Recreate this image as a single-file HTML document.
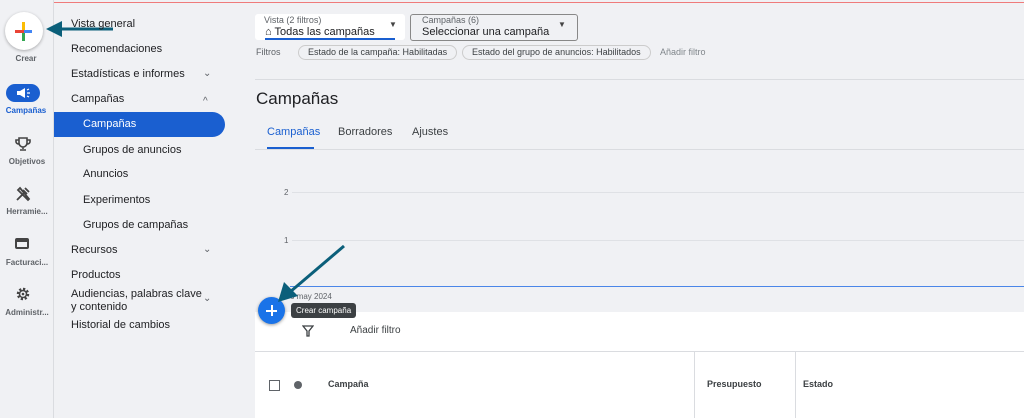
<!DOCTYPE html><html><head><style>
body{margin:0;width:1024px;height:418px;overflow:hidden;background:#f0f1f4;font-family:"Liberation Sans",sans-serif;color:#202124;position:relative}
.a{position:absolute;white-space:nowrap}
.rail{position:absolute;left:0;top:0;width:53px;height:418px;border-right:1px solid #dadce0;background:#f0f1f4}
.rl{position:absolute;width:54px;text-align:center;font-size:8px;color:#5f6368;font-weight:bold}
.nav{font-size:11px;color:#202124}
.ch{position:absolute;left:203px;font-size:10px;color:#5f6368}
</style></head><body>
<div class="a" style="left:4px;top:-10px;width:1030px;height:11px;border:1.5px solid #ef7b7b;border-radius:4px"></div>
<div class="rail"></div>
<div class="a" style="left:5px;top:12px;width:38px;height:38px;border-radius:50%;background:#fff;box-shadow:0 1px 3px rgba(0,0,0,.3)"></div>
<div class="a" style="left:15px;top:30px;width:9px;height:3px;background:#ea4335"></div>
<div class="a" style="left:24px;top:30px;width:8px;height:3px;background:#4285f4"></div>
<div class="a" style="left:22px;top:22px;width:3px;height:8px;background:#fbbc04"></div>
<div class="a" style="left:22px;top:33px;width:3px;height:8px;background:#34a853"></div>
<div class="rl" style="top:54px;left:-1px">Crear</div>
<div class="a" style="left:6px;top:84px;width:34px;height:18px;border-radius:9px;background:#1a5fd0"></div>
<svg class="a" style="left:15px;top:86px" width="16" height="14"><path d="M2 5H5L10 2V12L5 9H2Z" fill="#fff"/><path d="M12 4L14 3M12 7H15M12 10L14 11" stroke="#fff" stroke-width="1.2"/></svg>
<div class="rl" style="top:106px;color:#1a5fd0;left:-1px">Campañas</div>
<svg class="a" style="left:15px;top:136px" width="16" height="16"><path d="M4 2H12V7A4 4 0 0 1 4 7Z M4 4H1V6A3 3 0 0 0 4 8 M12 4H15V6A3 3 0 0 1 12 8 M8 11V13 M5 14H11" fill="none" stroke="#444" stroke-width="1.6"/></svg>
<div class="rl" style="top:157px">Objetivos</div>
<svg class="a" style="left:15px;top:186px" width="16" height="16"><path d="M2 14L9 7M10 2L14 6M8 4L12 8M5 2L3 4L13 14L14 13Z" fill="none" stroke="#444" stroke-width="1.8"/></svg>
<div class="rl" style="top:207px">Herramie...</div>
<div class="a" style="left:15px;top:238px;width:14px;height:11px;border:2px solid #444;border-radius:2px;box-sizing:border-box;border-top-width:4px"></div>
<div class="rl" style="top:258px">Facturaci...</div>
<svg class="a" style="left:15px;top:286px" width="16" height="16"><circle cx="8" cy="8" r="5" fill="none" stroke="#444" stroke-width="2.5" stroke-dasharray="2.2 1.7"/><circle cx="8" cy="8" r="3.5" fill="none" stroke="#444" stroke-width="1.5"/><circle cx="8" cy="8" r="1.3" fill="#444"/></svg>
<div class="rl" style="top:308px">Administr...</div>
<svg class="a" style="left:38px;top:17px" width="80" height="22"><path d="M75 12H20" stroke="#0b5f7a" stroke-width="3"/><path d="M8 12L24 4V20Z" fill="#0b5f7a"/></svg>
<div class="a" style="left:54px;top:112px;width:171px;height:25px;background:#1a5fd0;border-radius:0 13px 13px 0"></div>
<div class="a nav" style="left:71px;top:18px">Vista general</div>
<div class="a nav" style="left:71px;top:43px">Recomendaciones</div>
<div class="a nav" style="left:71px;top:68px">Estadísticas e informes</div>
<div class="a nav" style="left:71px;top:93px">Campañas</div>
<div class="a nav" style="left:83px;top:118px;color:#fff">Campañas</div>
<div class="a nav" style="left:83px;top:144px">Grupos de anuncios</div>
<div class="a nav" style="left:83px;top:168px">Anuncios</div>
<div class="a nav" style="left:83px;top:194px">Experimentos</div>
<div class="a nav" style="left:83px;top:219px">Grupos de campañas</div>
<div class="a nav" style="left:71px;top:244px">Recursos</div>
<div class="a nav" style="left:71px;top:269px">Productos</div>
<div class="a nav" style="left:71px;top:288px;line-height:13px">Audiencias, palabras clave<br>y contenido</div>
<div class="a nav" style="left:71px;top:319px">Historial de cambios</div>
<div class="ch" style="top:68px">⌄</div><div class="ch" style="top:96px">^</div><div class="ch" style="top:244px">⌄</div><div class="ch" style="top:293px">⌄</div>
<div class="a" style="left:255px;top:14px;width:150px;height:26px;background:#fff;border-radius:3px"></div>
<div class="a" style="left:264px;top:15px;font-size:9px;color:#5f6368">Vista (2 filtros)</div>
<div class="a" style="left:265px;top:26px;font-size:11px">⌂ Todas las campañas</div>
<div class="a" style="left:265px;top:38px;width:130px;height:2px;background:#1a5fd0"></div>
<div class="a" style="left:389px;top:20px;font-size:8px;color:#444">▼</div>
<div class="a" style="left:410px;top:14px;width:166px;height:25px;border:1px solid #888;border-radius:3px"></div>
<div class="a" style="left:422px;top:15px;font-size:9px;color:#5f6368">Campañas (6)</div>
<div class="a" style="left:422px;top:26px;font-size:11px">Seleccionar una campaña</div>
<div class="a" style="left:558px;top:20px;font-size:8px;color:#444">▼</div>
<div class="a" style="left:256px;top:47px;font-size:9px;color:#5f6368">Filtros</div>
<div class="a" style="left:298px;top:45px;height:13px;padding:0 9px;border:1px solid #ccc;border-radius:8px;font-size:9px;line-height:13px;color:#3c4043">Estado de la campaña: Habilitadas</div>
<div class="a" style="left:462px;top:45px;height:13px;padding:0 9px;border:1px solid #ccc;border-radius:8px;font-size:9px;line-height:13px;color:#3c4043">Estado del grupo de anuncios: Habilitados</div>
<div class="a" style="left:660px;top:47px;font-size:9px;color:#80868b">Añadir filtro</div>
<div class="a" style="left:255px;top:79px;width:769px;height:1px;background:#dadce0"></div>
<div class="a" style="left:256px;top:89px;font-size:17px">Campañas</div>
<div class="a" style="left:267px;top:126px;font-size:11px;color:#1a5fd0">Campañas</div>
<div class="a" style="left:338px;top:126px;font-size:11px;color:#3c4043">Borradores</div>
<div class="a" style="left:412px;top:126px;font-size:11px;color:#3c4043">Ajustes</div>
<div class="a" style="left:267px;top:147px;width:47px;height:2px;background:#1a5fd0"></div>
<div class="a" style="left:255px;top:149px;width:769px;height:1px;background:#dadce0"></div>
<div class="a" style="left:284px;top:188px;font-size:8px;color:#5f6368">2</div>
<div class="a" style="left:292px;top:192px;width:732px;height:1px;background:#dfe1e5"></div>
<div class="a" style="left:284px;top:236px;font-size:8px;color:#5f6368">1</div>
<div class="a" style="left:292px;top:240px;width:732px;height:1px;background:#dfe1e5"></div>
<div class="a" style="left:290px;top:286px;width:734px;height:1px;background:#4a86e8"></div>
<div class="a" style="left:290px;top:292px;font-size:8px;color:#5f6368">6 may 2024</div>
<div class="a" style="left:255px;top:312px;width:769px;height:106px;background:#fff"></div>
<div class="a" style="left:255px;top:351px;width:769px;height:1px;background:#dadce0"></div>
<div class="a" style="left:694px;top:352px;width:1px;height:66px;background:#dadce0"></div>
<div class="a" style="left:795px;top:352px;width:1px;height:66px;background:#dadce0"></div>
<div class="a" style="left:291px;top:303px;height:15px;padding:0 5px;background:#3c4043;border-radius:3px;color:#fff;font-size:8px;line-height:15px">Crear campaña</div>
<div class="a" style="left:258px;top:297px;width:27px;height:27px;border-radius:50%;background:#1a73e8;box-shadow:0 1px 3px rgba(0,0,0,.4)"></div>
<div class="a" style="left:266px;top:310px;width:11px;height:1.5px;background:#fff"></div>
<div class="a" style="left:271px;top:305px;width:1.5px;height:11px;background:#fff"></div>
<svg class="a" style="left:274px;top:240px" width="76" height="64"><path d="M70 6L16 52" stroke="#0b5f7a" stroke-width="3"/><path d="M4 62L10 42L24 56Z" fill="#0b5f7a"/></svg>
<svg class="a" style="left:302px;top:325px" width="12" height="12"><path d="M1 1H11L7 6V11H5V6Z" fill="none" stroke="#3c4043" stroke-width="1.3"/></svg>
<div class="a" style="left:350px;top:325px;font-size:10px;color:#3c4043">Añadir filtro</div>
<div class="a" style="left:269px;top:380px;width:9px;height:9px;border:1px solid #5f6368"></div>
<div class="a" style="left:294px;top:381px;width:8px;height:8px;border-radius:50%;background:#5f6368"></div>
<div class="a" style="left:328px;top:379px;font-size:9px;font-weight:bold;color:#3c4043">Campaña</div>
<div class="a" style="left:707px;top:379px;font-size:9px;font-weight:bold;color:#3c4043">Presupuesto</div>
<div class="a" style="left:803px;top:379px;font-size:9px;font-weight:bold;color:#3c4043">Estado</div>
</body></html>
